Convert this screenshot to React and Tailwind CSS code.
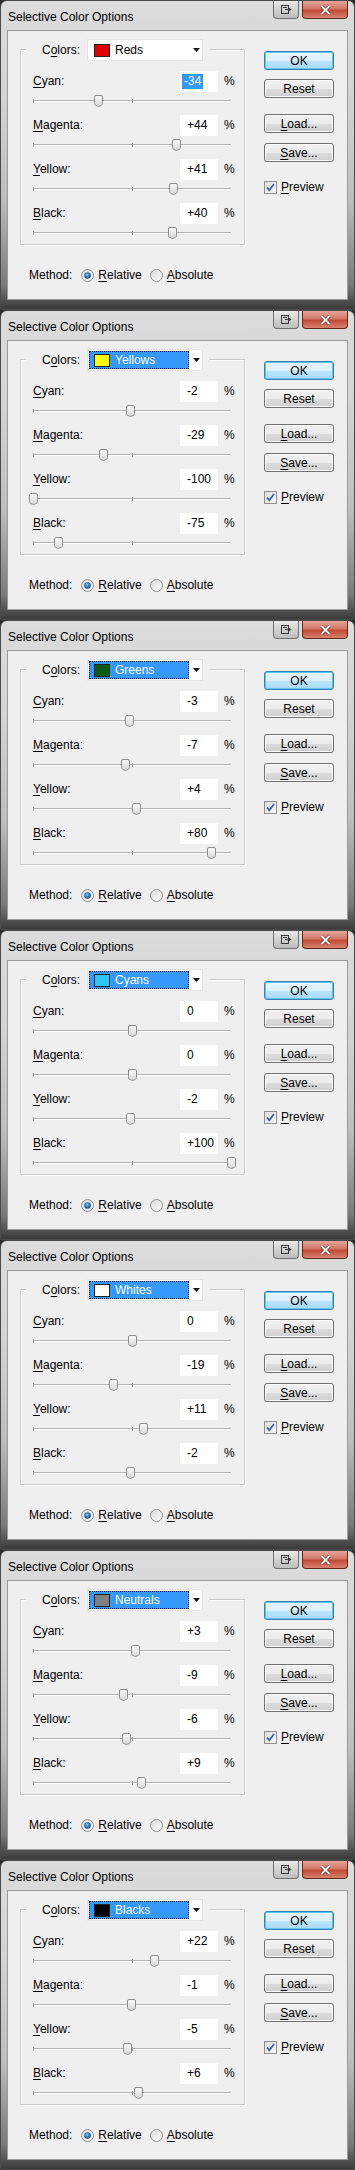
import React from "react";

const FONT = { fontFamily: '"Liberation Sans", Arial, sans-serif' };

const dialogs = [
  { name: "Reds", swatch: "#e00000", values: [-34, 44, 41, 40], hl: false },
  { name: "Yellows", swatch: "#ffff00", values: [-2, -29, -100, -75], hl: true },
  { name: "Greens", swatch: "#085c18", values: [-3, -7, 4, 80], hl: true },
  { name: "Cyans", swatch: "#2ec6f6", values: [0, 0, -2, 100], hl: true },
  { name: "Whites", swatch: "#ffffff", values: [0, -19, 11, -2], hl: true },
  { name: "Neutrals", swatch: "#7f7f7f", values: [3, -9, -6, 9], hl: true },
  { name: "Blacks", swatch: "#000000", values: [22, -1, -5, 6], hl: true },
];

const labels = [
  ["C", "yan:"],
  ["M", "agenta:"],
  ["Y", "ellow:"],
  ["B", "lack:"],
];

function fmt(v) {
  if (v > 0) return "+" + v;
  return String(v);
}

function Thumb() {
  return (
    <svg width="9" height="12" viewBox="0 0 9 12">
      <defs>
        <linearGradient id="tg" x1="0" y1="0" x2="0" y2="1">
          <stop offset="0" stopColor="#fbfbfb" />
          <stop offset="1" stopColor="#d6d6d6" />
        </linearGradient>
      </defs>
      <path
        d="M2 0.5 H7 Q8.5 0.5 8.5 2 V8.5 Q8.5 9.5 7.5 10.3 L5.2 11.3 Q4.5 11.6 3.8 11.3 L1.5 10.3 Q0.5 9.5 0.5 8.5 V2 Q0.5 0.5 2 0.5 Z"
        fill="url(#tg)"
        stroke="#8c8c8c"
      />
    </svg>
  );
}

function Slider({ value }) {
  const pct = ((value + 100) / 200) * 100;
  return (
    <div className="relative w-[198px] h-[12px]">
      <div className="absolute left-0 right-0 top-[5px] h-[2px] border-t border-[#b4b4b4] border-b border-b-white" />
      <div className="absolute left-0 top-[4px] w-px h-[4px] bg-[#9a9a9a]" />
      <div className="absolute left-[99px] top-[4px] w-px h-[4px] bg-[#9a9a9a]" />
      <div className="absolute top-0 -ml-[4px]" style={{ left: pct + "%" }}>
        <Thumb />
      </div>
    </div>
  );
}

function Row({ label, value, selected }) {
  return (
    <div className="flex flex-col h-[44px]">
      <div className="flex items-center h-[22px]">
        <div className="w-[159px] pl-[12px] text-[12px] text-black">
          <u className="underline-offset-2">{label[0]}</u>
          {label[1]}
        </div>
        <div className="w-[38px] h-[21px] bg-white flex items-center text-[12px] text-black">
          {selected ? (
            <span className="ml-[2px] bg-[#3399ff] text-white px-[2px] leading-[15px]">{fmt(value)}</span>
          ) : (
            <span className="ml-[7px]">{fmt(value)}</span>
          )}
        </div>
        <div className="ml-[6px] text-[12px] text-black">%</div>
      </div>
      <div className="mt-[3px] pl-[12px]">
        <Slider value={value} />
      </div>
    </div>
  );
}

function Dropdown({ name, swatch, hl }) {
  return (
    <div className="w-[116px] h-[22px] bg-white border border-[#e4e4e4] flex items-center">
      <div
        className={
          "flex items-center h-[18px] ml-[1px] w-[100px] " +
          (hl ? "bg-[#3399ff] outline outline-1 outline-dotted outline-[#1a1a1a] -outline-offset-1" : "")
        }
      >
        <div className="ml-[5px] w-[16px] h-[13px] border border-[#222]" style={{ backgroundColor: swatch }} />
        <span className={"ml-[5px] text-[12px] " + (hl ? "text-white" : "text-black")}>{name}</span>
      </div>
      <svg className="ml-[4px]" width="8" height="5" viewBox="0 0 8 5">
        <path d="M0 0 H7 L3.5 4 Z" fill="#111" />
      </svg>
    </div>
  );
}

function Button({ children, def }) {
  return (
    <div
      className={
        "w-[70px] h-[19px] rounded-[3px] border flex items-center justify-center text-[12px] text-black " +
        (def
          ? "border-[#3c7fb1] bg-[linear-gradient(180deg,#eaf6fd_0%,#d9f0fc_50%,#bee6fd_51%,#a7d9f5_100%)] shadow-[inset_0_0_0_1px_#5ec4ec]"
          : "border-[#707070] bg-[linear-gradient(180deg,#f2f2f2_0%,#ebebeb_50%,#dddddd_51%,#cfcfcf_100%)] shadow-[inset_0_0_0_1px_#fcfcfc]")
      }
    >
      {children}
    </div>
  );
}

function Radio({ on }) {
  return (
    <svg width="13" height="13" viewBox="0 0 13 13">
      <defs>
        <radialGradient id="rb" cx="0.45" cy="0.4" r="0.6">
          <stop offset="0" stopColor="#9bd3f8" />
          <stop offset="0.5" stopColor="#2f80c0" />
          <stop offset="1" stopColor="#15467a" />
        </radialGradient>
        <linearGradient id="rw" x1="0" y1="0" x2="1" y2="1">
          <stop offset="0" stopColor="#d8d8d8" />
          <stop offset="1" stopColor="#fdfdfd" />
        </linearGradient>
      </defs>
      <circle cx="6.5" cy="6.5" r="6" fill="url(#rw)" stroke="#8e8f8f" />
      {on && <circle cx="6.5" cy="6.5" r="3.3" fill="url(#rb)" />}
    </svg>
  );
}

function Checkbox() {
  return (
    <svg width="13" height="13" viewBox="0 0 13 13">
      <defs>
        <linearGradient id="cb" x1="0" y1="0" x2="1" y2="1">
          <stop offset="0" stopColor="#dcdcdc" />
          <stop offset="1" stopColor="#fafafa" />
        </linearGradient>
      </defs>
      <rect x="0.5" y="0.5" width="12" height="12" fill="url(#cb)" stroke="#8e8f8f" />
      <path d="M3 6.5 L5.3 9.2 L10 3" fill="none" stroke="#4a5f97" strokeWidth="1.8" />
    </svg>
  );
}

function Dialog({ d }) {
  return (
    <div
      className="w-[355px] h-[310px] flex flex-col rounded-t-[7px] border border-[#4a4a4a] bg-[linear-gradient(180deg,#dcdcdc_0%,#d4d4d4_30%,#bdbdbd_65%,#7a7a7a_92%,#3a3a3a_100%)]"
      style={FONT}
    >
      {/* title bar */}
      <div className="h-[29px] flex items-start relative">
        <div className="pl-[7px] pt-[7px] text-[12px] text-black">Selective Color Options</div>
        <div className="ml-auto flex items-start mr-[6px]">
          <div className="w-[26px] h-[18px] rounded-b-[4px] border border-t-0 border-[#6f6f6f] bg-[linear-gradient(180deg,#e8e8e8_0%,#d2d2d2_50%,#bdbdbd_100%)] flex items-center justify-center">
            <svg width="11" height="9" viewBox="0 0 11 9">
              <rect x="0.5" y="0.5" width="7" height="8" fill="none" stroke="#3a3a3a" />
              <rect x="2" y="2" width="4" height="1" fill="#3a3a3a" />
              <path d="M4 4.5 H8.5 M7 2.8 L9.5 4.5 L7 6.2" fill="none" stroke="#3a3a3a" strokeWidth="1.2" />
            </svg>
          </div>
          <div className="ml-[3px] w-[46px] h-[18px] rounded-b-[4px] border border-t-0 border-[#5b2a22] bg-[linear-gradient(180deg,#e5a79c_0%,#d27766_45%,#c24b34_55%,#d9826f_100%)] flex items-center justify-center">
            <svg width="11" height="10" viewBox="0 0 11 10">
              <path d="M1.5 1 L9.5 9 M9.5 1 L1.5 9" stroke="#6b2a20" strokeWidth="3.2" />
              <path d="M1.5 1 L9.5 9 M9.5 1 L1.5 9" stroke="#ffffff" strokeWidth="1.8" />
            </svg>
          </div>
        </div>
      </div>
      {/* client */}
      <div className="ml-[6px] mr-[6px] w-[341px] h-[270px] bg-[#efefef] border border-[#9a9a9a] flex">
        <div className="flex flex-col pl-[12px] pt-[18px]">
          <div className="relative w-[225px] h-[196px] border border-[#c9c9c9] shadow-[inset_1px_1px_0_#fff,1px_1px_0_#fff] pt-[20px]">
            <div className="absolute left-[5px] top-[-11px] w-[183px] h-[22px] bg-[#efefef] flex items-center">
              <div className="ml-[16px] w-[45px] text-[12px] text-black">
                C<u className="underline-offset-2">o</u>lors:
              </div>
              <Dropdown name={d.name} swatch={d.swatch} hl={d.hl} />
            </div>
            {d.values.map((v, i) => (
              <Row key={i} label={labels[i]} value={v} selected={!d.hl && i === 0} />
            ))}
          </div>
          <div className="flex items-center h-[20px] mt-[20px] text-[12px] text-black">
            <span className="ml-[9px]">Method:</span>
            <span className="ml-[9px] flex items-center">
              <Radio on />
            </span>
            <span className="ml-[4px]">
              <u className="underline-offset-2">R</u>elative
            </span>
            <span className="ml-[8px] flex items-center">
              <Radio on={false} />
            </span>
            <span className="ml-[4px]">
              <u className="underline-offset-2">A</u>bsolute
            </span>
          </div>
        </div>
        <div className="flex flex-col ml-[19px] pt-[20px]">
          <Button def>OK</Button>
          <div className="mt-[9px]">
            <Button>Reset</Button>
          </div>
          <div className="mt-[16px]">
            <Button>
              <u className="underline-offset-2">L</u>oad...
            </Button>
          </div>
          <div className="mt-[10px]">
            <Button>
              <u className="underline-offset-2">S</u>ave...
            </Button>
          </div>
          <div className="mt-[16px] flex items-center text-[12px] text-black">
            <Checkbox />
            <span className="ml-[4px]">
              <u className="underline-offset-2">P</u>review
            </span>
          </div>
        </div>
      </div>
    </div>
  );
}

export default function App() {
  return (
    <div className="w-[355px] bg-[#2a2a2a]">
      {dialogs.map((d, i) => (
        <Dialog key={i} d={d} />
      ))}
    </div>
  );
}
